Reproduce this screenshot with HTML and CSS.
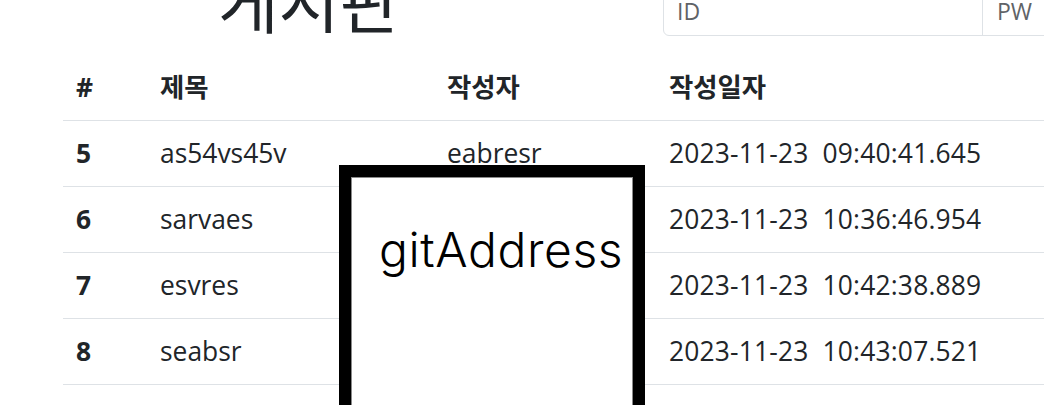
FILE: index.html
```html
<!DOCTYPE html>
<html lang="ko">
<head>
<meta charset="utf-8">
<title>게시판</title>
<link rel="stylesheet" href="styles.css">
</head>
<body>
<div class="page">
  <header class="top">
    <h1 class="title">게시판</h1>
    <form class="login">
      <input class="field field-id" type="text" placeholder="ID">
      <input class="field field-pw" type="password" placeholder="PW">
    </form>
  </header>
  <table class="board">
    <thead>
      <tr><th class="c-num">#</th><th class="c-title">제목</th><th class="c-writer">작성자</th><th class="c-date">작성일자</th></tr>
    </thead>
    <tbody>
      <tr><th>5</th><td>as54vs45v</td><td>eabresr</td><td class="date">2023-11-23&nbsp; 09:40:41.645</td></tr>
      <tr><th>6</th><td>sarvaes</td><td></td><td class="date">2023-11-23&nbsp; 10:36:46.954</td></tr>
      <tr><th>7</th><td>esvres</td><td></td><td class="date">2023-11-23&nbsp; 10:42:38.889</td></tr>
      <tr><th>8</th><td>seabsr</td><td></td><td class="date">2023-11-23&nbsp; 10:43:07.521</td></tr>
    </tbody>
  </table>
  <div class="git-box">
    <div class="git-text">gitAddress</div>
  </div>
</div>
</body>
</html>
```
FILE: styles.css
```css
html, body {
  margin: 0;
  padding: 0;
  background: #fff;
}
body {
  width: 1044px;
  height: 405px;
  overflow: hidden;
  font-family: "Open Sans", "Noto Sans CJK KR", sans-serif;
  color: #212529;
}
.page {
  position: relative;
  width: 1044px;
  height: 405px;
  overflow: hidden;
}
.top {
  display: flex;
  align-items: flex-start;
  height: 55px;
  padding-left: 218px;
}
.title {
  margin: -40px 0 0 0;
  width: 445px;
  flex: none;
  font-family: "Noto Sans CJK KR", sans-serif;
  font-weight: 400;
  font-size: 66px;
  line-height: 1.2;
  color: #212529;
}
.login {
  display: flex;
  margin: -14px 0 0 0;
  flex: none;
}
.field {
  box-sizing: border-box;
  height: 50px;
  padding: 6px 13px;
  border: 1px solid #dee2e6;
  font-family: "Open Sans", sans-serif;
  font-size: 23px;
  color: #212529;
  background: #fff;
  outline: none;
}
.field::placeholder {
  color: #5f6367;
}
.field-id {
  width: 320px;
  border-radius: 0 0 0 6px;
}
.field-pw {
  width: 300px;
  margin-left: -1px;
  padding-left: 14px;
  border-radius: 0;
}
.board {
  margin-left: 63px;
  width: 1100px;
  border-collapse: separate;
  border-spacing: 0;
  table-layout: fixed;
  font-size: 26.4px;
  line-height: 39.6px;
}
.board th, .board td {
  padding: 12.7px 13px;
  border-bottom: 1px solid #dee2e6;
  text-align: left;
  vertical-align: middle;
  white-space: nowrap;
  font-weight: 400;
}
.board th {
  font-weight: 700;
}
.board .date {
  letter-spacing: 0.18px;
}
.c-num { width: 58px; }
.c-title { width: 261px; }
.c-writer { width: 196px; }
.c-date { width: auto; }
.git-box {
  position: absolute;
  left: 339px;
  top: 165px;
  width: 306px;
  height: 300px;
  box-sizing: border-box;
  border: 12px solid #000;
  box-shadow: inset 0 0 0 1px #8a8a8a;
  background: #fff;
  padding: 43px 0 0 28px;
}
.git-text {
  font-family: "Inter", sans-serif;
  font-size: 48px;
  font-weight: 300;
  letter-spacing: 0.6px;
  line-height: normal;
  color: #000;
  white-space: nowrap;
}
```
